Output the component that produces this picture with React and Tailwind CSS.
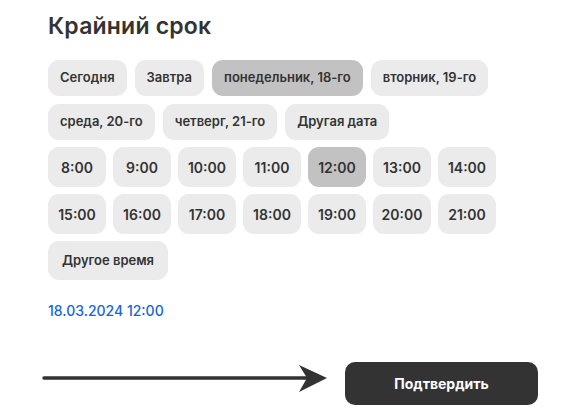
const dateChips = [
  [
    { label: "Сегодня" },
    { label: "Завтра" },
    { label: "понедельник, 18-го", active: true },
    { label: "вторник, 19-го" },
  ],
  [{ label: "среда, 20-го" }, { label: "четверг, 21-го" }, { label: "Другая дата" }],
];

const times = [
  "8:00", "9:00", "10:00", "11:00", "12:00", "13:00", "14:00",
  "15:00", "16:00", "17:00", "18:00", "19:00", "20:00", "21:00",
];

export default function App() {
  return (
    <div className="w-[580px] h-[420px] bg-white text-[#333333] px-[48px] pt-[11px] font-['Inter','Noto_Sans',sans-serif]">
      <h1 className="text-[23px] leading-[30px] font-semibold tracking-[0.2px]">Крайний срок</h1>

      {/* date chips */}
      <div className="mt-[19px] flex flex-col gap-[8px]">
        {dateChips.map((row, i) => (
          <div key={i} className="flex gap-[8px]">
            {row.map((c) => (
              <button
                key={c.label}
                className={`h-[36px] px-[12px] rounded-[11px] text-[13px] font-semibold ${
                  c.active ? "bg-[#c2c2c2]" : "bg-[#ebebeb]"
                }`}
              >
                {c.label}
              </button>
            ))}
          </div>
        ))}
      </div>

      {/* time chips */}
      <div className="mt-[7px] w-[448px] grid grid-cols-7 gap-[7px]">
        {times.map((t) => (
          <button
            key={t}
            className={`h-[40px] rounded-[11px] text-[14px] font-semibold ${
              t === "12:00" ? "bg-[#c2c2c2]" : "bg-[#ebebeb]"
            }`}
          >
            {t}
          </button>
        ))}
      </div>
      <div className="mt-[7px]">
        <button className="h-[39px] w-[120px] rounded-[11px] bg-[#ebebeb] text-[13px] font-semibold">
          Другое время
        </button>
      </div>

      <div className="mt-[21px] text-[14px] leading-[20px] font-medium text-[#1565d8]">18.03.2024 12:00</div>

      {/* confirm row */}
      <div className="mt-[41px] -ml-[6px] flex items-start">
        <svg width="288" height="32" viewBox="0 0 288 32" className="mt-[1px] shrink-0">
          <line x1="2" y1="15" x2="265" y2="15" stroke="#333333" strokeWidth="3.5" strokeLinecap="round" />
          <path d="M257 2 L285 15 L257 29 L265 15 Z" fill="#333333" />
        </svg>
        <button className="ml-[15px] shrink-0 h-[43px] w-[193px] rounded-[10px] bg-[#333333] text-white text-[14px] font-bold">
          Подтвердить
        </button>
      </div>
    </div>
  );
}
